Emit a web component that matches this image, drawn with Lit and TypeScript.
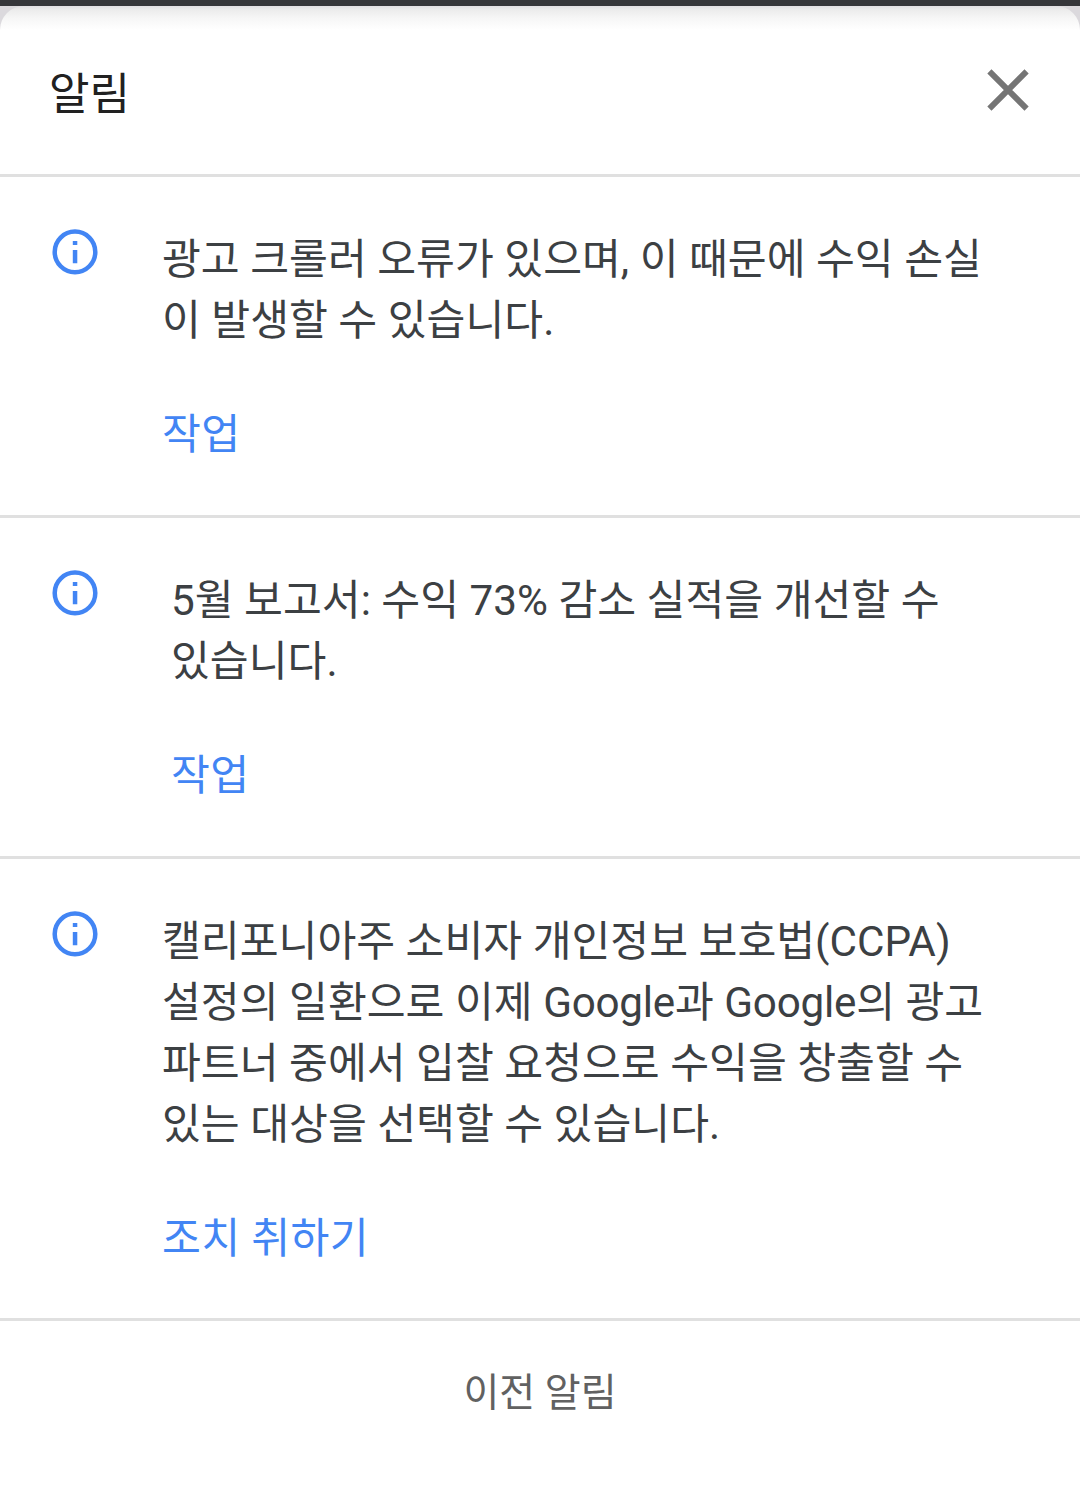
import { LitElement, html, css } from "lit";
import { customElement } from "lit/decorators.js";

interface Notice { lines: string[]; action: string; inset?: boolean; }

const NOTICES: Notice[] = [
  { lines: ["광고 크롤러 오류가 있으며, 이 때문에 수익 손실", "이 발생할 수 있습니다."], action: "작업" },
  { lines: ["5월 보고서: 수익 73% 감소 실적을 개선할 수", "있습니다."], action: "작업", inset: true },
  { lines: ["캘리포니아주 소비자 개인정보 보호법(CCPA)", "설정의 일환으로 이제 Google과 Google의 광고", "파트너 중에서 입찰 요청으로 수익을 창출할 수", "있는 대상을 선택할 수 있습니다."], action: "조치 취하기" },
];

@customElement("app-root")
export class AppRoot extends LitElement {
  static styles = css`
    :host { display: block; height: 1485px; overflow: hidden; background: #dbd9dd; border-top: 6px solid #35363a; box-sizing: border-box; font-family: Roboto, "Noto Sans CJK KR", sans-serif; color: #3c4043; }
    .sheet { height: 1479px; background: linear-gradient(#e1dfe3, #ececec 4px, #f6f6f6 12px, #fff 24px); border-radius: 24px 24px 0 0; }
    header { height: 171px; box-sizing: border-box; border-bottom: 3px solid #e0e0e0; display: flex; justify-content: space-between; padding: 54px 51px 0 49px; }
    h1 { margin: 3px 0 0; font-size: 44px; line-height: 64px; font-weight: 400; color: #212121; }
    .close { width: 42px; height: 42px; margin-top: 9px; }
    .notice { display: flex; box-sizing: border-box; padding: 52px 0 50px 52px; border-bottom: 3px solid #e0e0e0; }
    .notice:last-of-type { padding-bottom: 49px; }
    .info { width: 46px; height: 46px; flex: none; }
    .body { margin-left: 64px; font-size: 42.24px; line-height: 61px; white-space: nowrap; }
    .inset { margin-left: 73px; }
    .brand { letter-spacing: -0.25px; }
    .action { margin-top: 53px; color: #4285f4; letter-spacing: 0.35px; }
    footer { padding-top: 43px; text-align: center; font-size: 39px; line-height: 58px; color: #616161; }
  `;

  private line(text: string) {
    return text.split(/(Google)/).map((t) => (t === "Google" ? html`<span class="brand">${t}</span>` : t));
  }

  render() {
    return html`<div class="sheet">
      <header><h1>알림</h1>
        <svg class="close" viewBox="0 0 42 42"><path d="M2.4 2.4 39.6 39.6M39.6 2.4 2.4 39.6" stroke="#757575" stroke-width="5.9" fill="none"/></svg>
      </header>
      ${NOTICES.map((n) => html`<section class="notice">
        <svg class="info" viewBox="0 0 46 46"><circle cx="23" cy="22.9" r="20.3" fill="none" stroke="#4285f4" stroke-width="4.5"/><path d="M20.8 12h4.5v4h-4.5zM20.8 21h4.5v13.2h-4.5z" fill="#4285f4"/></svg>
        <div class="body ${n.inset ? "inset" : ""}">${n.lines.map((l) => html`<div>${this.line(l)}</div>`)}<div class="action">${n.action}</div></div>
      </section>`)}
      <footer>이전 알림</footer>
    </div>`;
  }
}
